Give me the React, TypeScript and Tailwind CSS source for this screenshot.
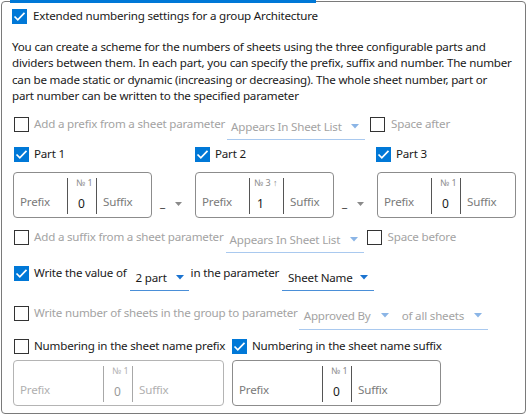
import React from "react";

const FONT = { fontFamily: '"Noto Sans", "Open Sans", sans-serif', letterSpacing: "-0.2px" };

function Check({ checked }: { checked?: boolean }) {
  if (checked) {
    return (
      <div className="w-[15px] h-[15px] bg-[#0078d7] flex items-center justify-center shrink-0">
        <svg width="15" height="15" viewBox="0 0 15 15">
          <path d="M2.5 7.5 L5.8 10.8 L12.5 3.8" stroke="white" strokeWidth="1.7" fill="none" />
        </svg>
      </div>
    );
  }
  return <div className="w-[15px] h-[15px] border border-[#333] shrink-0 bg-white" />;
}

function Arrow({ light }: { light?: boolean }) {
  return (
    <svg width="8" height="5" viewBox="0 0 8 5" className="shrink-0">
      <path d="M0 0 L8 0 L4 4.5 Z" fill={light ? "#8bb5e6" : "#1a73d0"} />
    </svg>
  );
}

function Drop({
  text,
  w,
  pl,
  light,
  underline = true,
  arrowPr = 6,
}: {
  text: string;
  w: number;
  pl: number;
  light?: boolean;
  underline?: boolean;
  arrowPr?: number;
}) {
  return (
    <div
      className={`h-[26px] flex items-center justify-between shrink-0 ${underline ? (light ? "border-b border-[#a9c9ef]" : "border-b border-[#4a8fd8]") : ""}`}
      style={{ width: w, paddingLeft: pl, paddingRight: arrowPr }}
    >
      <span className={`whitespace-nowrap ${light ? "text-[#a3a3a3]" : "text-[#1a1a1a]"}`}>{text}</span>
      <Arrow light={light} />
    </div>
  );
}

function NumBox({
  w,
  prefixW,
  numW = 28,
  labelL = 8,
  valueL = 10,
  label,
  value,
  disabled,
}: {
  w: number;
  prefixW: number;
  numW?: number;
  labelL?: number;
  valueL?: number;
  label: string;
  value: string;
  disabled?: boolean;
}) {
  const border = disabled ? "border-[#b4b4b4]" : "border-[#8c8c8c]";
  const txt = disabled ? "text-[#b0b0b0]" : "text-[#7a7a7a]";
  const val = disabled ? "text-[#9a9a9a]" : "text-[#1a1a1a]";
  const div = disabled ? "bg-[#a8a8a8]" : "bg-[#555]";
  return (
    <div className={`h-[46px] border rounded-[4px] flex shrink-0 ${border}`} style={{ width: w }}>
      <div className="h-full flex items-center pl-[6px] pt-[14px]" style={{ width: prefixW - 1 }}>
        <span className={txt}>Prefix</span>
      </div>
      <div className={`w-px mt-[5px] mb-[3px] ${div}`} />
      <div className="h-full relative shrink-0" style={{ width: numW }}>
        <span
          className={`absolute top-[4px] whitespace-nowrap text-[9px] leading-[12px] ${disabled ? "text-[#b0b0b0]" : "text-[#8a8a8a]"}`}
          style={{ letterSpacing: 0, left: labelL }}
        >
          {label}
        </span>
        <span className={`absolute top-[22px] leading-[18px] text-[12px] ${val}`} style={{ left: valueL }}>
          {value}
        </span>
      </div>
      <div className={`w-px mt-[5px] mb-[3px] ${div}`} />
      <div className="h-full flex items-center pl-[6px] pt-[14px]">
        <span className={txt}>Suffix</span>
      </div>
    </div>
  );
}

function Sep() {
  return (
    <div className="w-[43px] h-[46px] flex items-end pb-[8px] shrink-0">
      <span className="ml-[8px] text-[#1a1a1a] leading-[14px]">_</span>
      <div className="ml-[10px] mb-[4px]">
        <svg width="7" height="4" viewBox="0 0 7 4">
          <path d="M0 0 L7 0 L3.5 4 Z" fill="#8a8a8a" />
        </svg>
      </div>
    </div>
  );
}

export default function App() {
  return (
    <div className="w-[528px] h-[415px] bg-white relative text-[11.6px] leading-[16px]" style={FONT}>
      <div className="absolute left-[1px] top-[1px] w-[525px] h-[413px] border border-[#7a7a7a] rounded-[4px] pl-[10px] pt-[4px] flex flex-col">
        {/* header */}
        <div className="h-[20px] flex items-center gap-[6px]">
          <Check checked />
          <span className="text-[#1a1a1a] whitespace-nowrap">Extended numbering settings for a group Architecture</span>
        </div>
        {/* paragraph */}
        <div className="mt-[13px] leading-[16.3px] text-[#1a1a1a] whitespace-nowrap">
          You can create a scheme for the numbers of sheets using the three configurable parts and
          <br />
          dividers between them. In each part, you can specify the prefix, suffix and number. The number
          <br />
          can be made static or dynamic (increasing or decreasing). The whole sheet number, part or
          <br />
          part number can be written to the specified parameter
        </div>
        {/* prefix row */}
        <div className="mt-[10px] h-[20px] flex items-center pl-[2px]">
          <Check />
          <span className="ml-[5px] text-[#a3a3a3] whitespace-nowrap">Add a prefix from a sheet parameter</span>
          <div className="ml-[2px] mt-[6px]">
            <Drop text="Appears In Sheet List" w={138} pl={4} light />
          </div>
          <div className="ml-[5px] flex items-center">
            <Check />
            <span className="ml-[6px] text-[#a3a3a3] whitespace-nowrap">Space after</span>
          </div>
        </div>
        {/* part row */}
        <div className="mt-[10px] h-[20px] flex items-center pl-[2px]">
          <div className="w-[181px] flex items-center">
            <Check checked />
            <span className="ml-[5px] text-[#1a1a1a]">Part 1</span>
          </div>
          <div className="w-[181px] flex items-center">
            <Check checked />
            <span className="ml-[5px] text-[#1a1a1a]">Part 2</span>
          </div>
          <div className="flex items-center">
            <Check checked />
            <span className="ml-[5px] text-[#1a1a1a]">Part 3</span>
          </div>
        </div>
        {/* boxes */}
        <div className="mt-[8px] flex items-start pl-[1px]">
          <NumBox w={139} prefixW={54} label="№ 1" value="0" />
          <Sep />
          <NumBox w={139} prefixW={54} numW={33} labelL={4} valueL={7} label="№ 3 ↑" value="1" />
          <Sep />
          <NumBox w={139} prefixW={54} label="№ 1" value="0" />
        </div>
        {/* suffix row */}
        <div className="mt-[9px] h-[20px] flex items-center pl-[2px]">
          <Check />
          <span className="ml-[5px] text-[#a3a3a3] whitespace-nowrap">Add a suffix from a sheet parameter</span>
          <div className="ml-[2px] mt-[6px]">
            <Drop text="Appears In Sheet List" w={138} pl={4} light />
          </div>
          <div className="ml-[3px] flex items-center">
            <Check />
            <span className="ml-[6px] text-[#a3a3a3] whitespace-nowrap">Space before</span>
          </div>
        </div>
        {/* write row */}
        <div className="mt-[16px] h-[20px] flex items-center pl-[2px]">
          <Check checked />
          <span className="ml-[5px] text-[#1a1a1a] whitespace-nowrap">Write the value of</span>
          <div className="ml-[3px] mt-[10px]">
            <Drop text="2 part" w={59} pl={6} arrowPr={5} />
          </div>
          <span className="ml-[2px] text-[#1a1a1a] whitespace-nowrap">in the parameter</span>
          <div className="ml-[3px] mt-[10px]">
            <Drop text="Sheet Name" w={92} pl={6} arrowPr={6} />
          </div>
        </div>
        {/* write number row */}
        <div className="mt-[20px] h-[20px] flex items-center pl-[2px]">
          <Check />
          <span className="ml-[5px] text-[#a3a3a3] whitespace-nowrap">Write number of sheets in the group to parameter</span>
          <div className="ml-[1px] mt-[6px] flex border-b border-[#a9c9ef]">
            <Drop text="Approved By" w={96} pl={5} light underline={false} />
            <Drop text="of all sheets" w={93} pl={7} light underline={false} />
          </div>
        </div>
        {/* numbering row */}
        <div className="mt-[13px] h-[20px] flex items-center pl-[2px]">
          <div className="w-[218px] flex items-center">
            <Check />
            <span className="ml-[5px] text-[#1a1a1a] whitespace-nowrap">Numbering in the sheet name prefix</span>
          </div>
          <Check checked />
          <span className="ml-[5px] text-[#1a1a1a] whitespace-nowrap">Numbering in the sheet name suffix</span>
        </div>
        {/* bottom boxes */}
        <div className="mt-[4px] flex items-start pl-[1px] gap-[8px]">
          <NumBox w={211} prefixW={90} label="№ 1" value="0" disabled />
          <NumBox w={209} prefixW={90} label="№ 1" value="0" />
        </div>
      </div>
      <div className="absolute left-[10px] top-0 w-[306px] h-[3px] bg-[#0078d7]" />
    </div>
  );
}
